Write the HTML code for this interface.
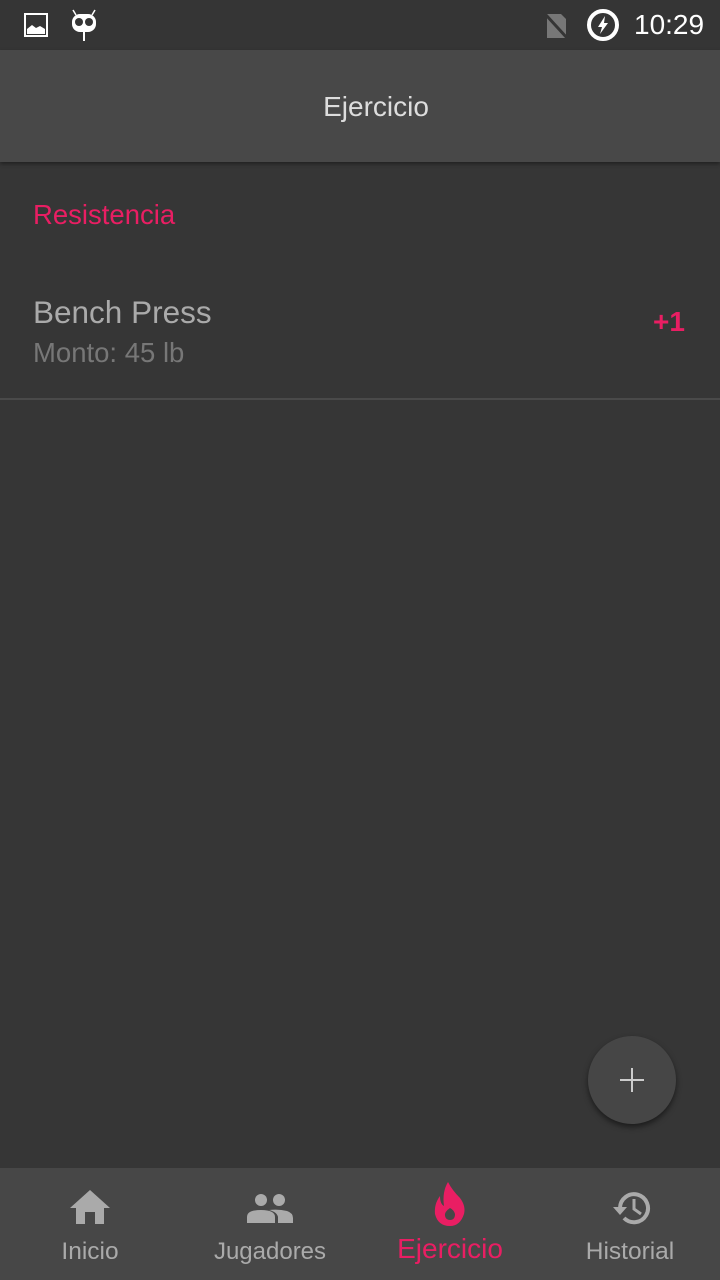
<!DOCTYPE html>
<html><head><meta charset="utf-8"><style>
*{margin:0;padding:0;box-sizing:border-box}
body{width:720px;height:1280px;background:#363636;font-family:"Liberation Sans",sans-serif;position:relative;overflow:hidden}
.abs{position:absolute}
</style></head><body>
<div class="abs" style="left:0;top:0;width:720px;height:50px;background:#353535"></div>
<svg class="abs" style="left:24px;top:13px" width="24" height="24" viewBox="0 0 24 24"><rect x="1" y="1" width="22" height="22" fill="none" stroke="#fff" stroke-width="2"/><path d="M3 21 L3 16 L8 12 L12 15 L16 13 L21 16 L21 21Z" fill="#fff"/></svg>
<svg class="abs" style="left:70px;top:8px" width="28" height="34" viewBox="0 0 28 34"><path d="M3 2 L6 7 M25 2 L22 7" stroke="#fff" stroke-width="1.5"/><rect x="2" y="6" width="24" height="18" rx="8" fill="#fff"/><circle cx="9" cy="14" r="4" fill="#353535"/><circle cx="19" cy="14" r="4" fill="#353535"/><rect x="13" y="24" width="2" height="9" fill="#fff"/></svg>
<svg class="abs" style="left:544px;top:12px" width="26" height="28" viewBox="0 0 26 28"><path d="M3 2 H17 L22 7 V26 H3Z" fill="#777"/><path d="M2 3 L24 27" stroke="#353535" stroke-width="3"/></svg>
<svg class="abs" style="left:586px;top:8px" width="34" height="34" viewBox="0 0 34 34"><circle cx="17" cy="17" r="14" fill="none" stroke="#fff" stroke-width="4"/><path d="M19 8 L12 19 H16 L14 26 L22 15 H18Z" fill="#fff"/></svg>
<div class="abs" style="left:634px;top:9px;font-size:28px;color:#fff">10:29</div>
<div class="abs" style="left:0;top:50px;width:720px;height:112px;background:#484848;box-shadow:0 2px 4px rgba(0,0,0,.4)"></div>
<div class="abs" style="left:0;top:91px;width:752px;text-align:center;font-size:28px;color:#ddd">Ejercicio</div>
<div class="abs" style="left:33px;top:199px;font-size:27.5px;color:#e91e63">Resistencia</div>
<div class="abs" style="left:33px;top:294px;font-size:31.5px;color:#aaa">Bench Press</div>
<div class="abs" style="left:33px;top:337px;font-size:27.5px;color:#777">Monto: 45 lb</div>
<div class="abs" style="left:653px;top:306px;font-size:28px;color:#e91e63;font-weight:bold">+1</div>
<div class="abs" style="left:0;top:398px;width:720px;height:2px;background:#4a4a4a"></div>
<div class="abs" style="left:588px;top:1036px;width:88px;height:88px;border-radius:50%;background:#464646;box-shadow:0 3px 6px rgba(0,0,0,.5)"></div>
<div class="abs" style="left:620px;top:1079px;width:24px;height:2px;background:#ccc"></div>
<div class="abs" style="left:631px;top:1068px;width:2px;height:24px;background:#ccc"></div>
<div class="abs" style="left:0;top:1168px;width:720px;height:112px;background:#474747"></div>
<svg class="abs" style="left:70px;top:1190px" width="40" height="36" viewBox="0 0 40 36"><path d="M20 0 L40 18 H34 V34 H25 V22 H15 V34 H6 V18 H0Z" fill="#aaa"/></svg>
<svg class="abs" style="left:247px;top:1193px" width="46" height="30" viewBox="0 0 46 30"><circle cx="14" cy="7" r="6" fill="#aaa"/><circle cx="32" cy="7" r="6" fill="#aaa"/><path d="M0 30 V24 Q0 17 14 17 Q28 17 28 24 V30Z M22 17 Q32 16 40 18 Q46 20 46 25 V30 H31 V24 Q30 19 22 17Z" fill="#aaa"/></svg>
<svg class="abs" style="left:432px;top:1182px" width="36" height="44" viewBox="0 0 36 44"><path d="M16 0 Q20 8 28 16 Q34 24 32 32 Q28 44 18 44 Q6 44 3 32 Q2 22 8 14 Q8 22 12 24 Q10 10 16 0Z M18 26 Q12 30 13 34 Q14 38 18 38 Q23 38 23 32 Q22 28 18 26Z" fill="#e91e63" fill-rule="evenodd"/></svg>
<svg class="abs" style="left:610px;top:1188px" width="42" height="40" viewBox="0 0 42 40"><path d="M10 20 A14 14 0 1 1 14 30" fill="none" stroke="#aaa" stroke-width="4"/><path d="M3 19 H17 L10 27Z" fill="#aaa"/><path d="M24 11 V21 L31 26" fill="none" stroke="#aaa" stroke-width="3"/></svg>
<div class="abs" style="left:0;top:1238px;width:180px;text-align:center;font-size:24.5px;color:#aaa">Inicio</div>
<div class="abs" style="left:180px;top:1238px;width:180px;text-align:center;font-size:24px;color:#aaa">Jugadores</div>
<div class="abs" style="left:360px;top:1233px;width:180px;text-align:center;font-size:28px;color:#e91e63">Ejercicio</div>
<div class="abs" style="left:540px;top:1238px;width:180px;text-align:center;font-size:24.5px;color:#aaa">Historial</div>
</body></html>
